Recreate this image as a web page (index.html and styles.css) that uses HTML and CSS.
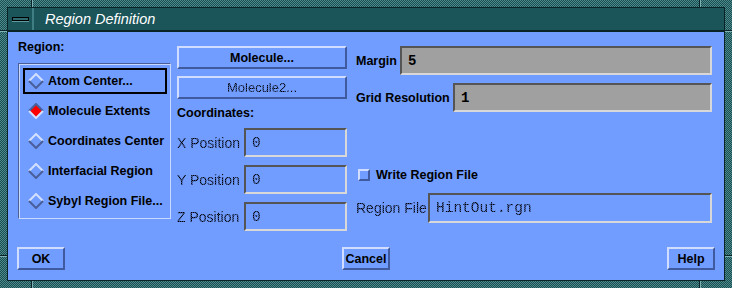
FILE: index.html
```html
<!DOCTYPE html>
<html lang="en">
<head>
  <meta charset="UTF-8">
  <title>Region Definition</title>
  <link rel="stylesheet" href="styles.css">
</head>
<body>
  <div class="window">
    <div class="inner">
      <!-- Title bar -->
      <div class="titlebar">
        <div class="menu-btn"><span class="menu-bar"></span></div>
        <div class="title">Region Definition</div>
      </div>

      <div class="content">
        <div class="top">
          <!-- Region choice -->
          <div class="col-left">
            <div class="label">Region:</div>
            <div class="radio-box">
              <div class="radio focus">
                <svg class="diamond" width="16" height="16" viewBox="0 0 16 16"><polygon points="8,1 15,8 8,15 1,8" fill="#709dff"/><polyline points="1,8 8,1 15,8" fill="none" stroke="#d4e0ff" stroke-width="2"/><polyline points="1,8 8,15 15,8" fill="none" stroke="#4a5f9a" stroke-width="2"/></svg>
                Atom Center...
              </div>
              <div class="radio">
                <svg class="diamond" width="16" height="16" viewBox="0 0 16 16"><polygon points="8,1 15,8 8,15 1,8" fill="#ff0000"/><polyline points="1,8 8,1 15,8" fill="none" stroke="#4a5f9a" stroke-width="2"/><polyline points="1,8 8,15 15,8" fill="none" stroke="#d4e0ff" stroke-width="2"/></svg>
                Molecule Extents
              </div>
              <div class="radio">
                <svg class="diamond" width="16" height="16" viewBox="0 0 16 16"><polygon points="8,1 15,8 8,15 1,8" fill="#709dff"/><polyline points="1,8 8,1 15,8" fill="none" stroke="#d4e0ff" stroke-width="2"/><polyline points="1,8 8,15 15,8" fill="none" stroke="#4a5f9a" stroke-width="2"/></svg>
                Coordinates Center
              </div>
              <div class="radio">
                <svg class="diamond" width="16" height="16" viewBox="0 0 16 16"><polygon points="8,1 15,8 8,15 1,8" fill="#709dff"/><polyline points="1,8 8,1 15,8" fill="none" stroke="#d4e0ff" stroke-width="2"/><polyline points="1,8 8,15 15,8" fill="none" stroke="#4a5f9a" stroke-width="2"/></svg>
                Interfacial Region
              </div>
              <div class="radio">
                <svg class="diamond" width="16" height="16" viewBox="0 0 16 16"><polygon points="8,1 15,8 8,15 1,8" fill="#709dff"/><polyline points="1,8 8,1 15,8" fill="none" stroke="#d4e0ff" stroke-width="2"/><polyline points="1,8 8,15 15,8" fill="none" stroke="#4a5f9a" stroke-width="2"/></svg>
                Sybyl Region File...
              </div>
            </div>
          </div>

          <!-- Molecule / coordinates -->
          <div class="col-mid">
            <button class="btn wide">Molecule...</button>
            <button class="btn wide"><span class="stipple thin">Molecule2...</span></button>
            <div class="label coords">Coordinates:</div>
            <div class="pos-row">
              <span class="pos-label stipple">X Position</span>
              <div class="field"><span class="stipple mono">0</span></div>
            </div>
            <div class="pos-row">
              <span class="pos-label stipple">Y Position</span>
              <div class="field"><span class="stipple mono">0</span></div>
            </div>
            <div class="pos-row">
              <span class="pos-label stipple">Z Position</span>
              <div class="field"><span class="stipple mono">0</span></div>
            </div>
          </div>

          <!-- Margin / grid / file -->
          <div class="col-right">
            <div class="row">
              <span class="label lbl-margin">Margin</span>
              <div class="field grey">5</div>
            </div>
            <div class="row">
              <span class="label lbl-grid">Grid Resolution</span>
              <div class="field grey">1</div>
            </div>
            <div class="check-row">
              <span class="checkbox"></span>
              <span class="label">Write Region File</span>
            </div>
            <div class="row file-row">
              <span class="pos-label lbl-file stipple">Region File</span>
              <div class="field"><span class="stipple mono">HintOut.rgn</span></div>
            </div>
          </div>
        </div>

        <!-- Buttons -->
        <div class="actions">
          <button class="btn">OK</button>
          <button class="btn">Cancel</button>
          <button class="btn">Help</button>
        </div>
      </div>
    </div>
  </div>
</body>
</html>
```

FILE: styles.css
```css
body {
  margin: 0;
  width: 732px;
  height: 288px;
  font-family: "Liberation Sans", Arial, sans-serif;
  font-size: 12.5px;
  font-weight: bold;
  color: #000;
  overflow: hidden;
}

/* Fensterrahmen mit Ecken-Kerben */
.window {
  box-sizing: border-box;
  width: 732px;
  height: 288px;
  padding: 7px;
  background:
    linear-gradient(90deg, #0a2326 1px, #7fb2b4 1px) 31px 0 / 2px 8px no-repeat,
    linear-gradient(90deg, #0a2326 1px, #7fb2b4 1px) 31px 280px / 2px 8px no-repeat,
    linear-gradient(90deg, #0a2326 1px, #7fb2b4 1px) 699px 0 / 2px 8px no-repeat,
    linear-gradient(90deg, #0a2326 1px, #7fb2b4 1px) 699px 280px / 2px 8px no-repeat,
    linear-gradient(#0a2326 1px, #7fb2b4 1px) 0 30px / 8px 2px no-repeat,
    linear-gradient(#0a2326 1px, #7fb2b4 1px) 724px 30px / 8px 2px no-repeat,
    linear-gradient(#0a2326 1px, #7fb2b4 1px) 0 255px / 8px 2px no-repeat,
    linear-gradient(#0a2326 1px, #7fb2b4 1px) 724px 255px / 8px 2px no-repeat,
    repeating-conic-gradient(#1b4d51 0 25%, #4b8a8d 0 50%) 0 0 / 2px 2px,
    #2f6c70;
}

.inner {
  box-sizing: border-box;
  height: 100%;
  border: 1px solid #0a2326;
  display: flex;
  flex-direction: column;
}

/* Titelzeile */
.titlebar {
  height: 22px;
  display: flex;
  background-color: #1b5459;
  border-bottom: 2px solid #0a2326;
}

.menu-btn {
  width: 24px;
  display: flex;
  align-items: center;
  justify-content: center;
  border-right: 2px solid #3f7e82;
}

.menu-bar {
  width: 15px;
  height: 2px;
  border: 1px solid #000;
  background-color: #2f6c70;
  box-shadow: 0 1px 0 #5f9a9c;
}

.title {
  padding-left: 11px;
  line-height: 22px;
  font-size: 14.5px;
  font-style: italic;
  font-weight: normal;
  color: #fff;
}

.content {
  flex: 1;
  display: flex;
  flex-direction: column;
  background-color: #709dff;
}

.top {
  flex: 1;
  display: flex;
  padding: 8px 12px 0 10px;
}

.label {
  line-height: 14px;
  white-space: nowrap;
}

/* linke Spalte */
.col-left {
  width: 153px;
}

.radio-box {
  margin-top: 9px;
  padding: 4px 3px 0 4px;
  border: 1px solid #c8d8ff;
  border-top-color: #4a5f9a;
  border-left-color: #4a5f9a;
  box-shadow: inset 1px 1px 0 #c8d8ff;
}

.radio {
  height: 26px;
  box-sizing: border-box;
  margin-bottom: 4px;
  padding-left: 3px;
  border: 2px solid transparent;
  display: flex;
  align-items: center;
  gap: 4px;
  white-space: nowrap;
}

.radio.focus {
  border-color: #000;
}

.diamond {
  flex: none;
}

/* mittlere Spalte */
.col-mid {
  width: 170px;
  margin-left: 6px;
  padding-top: 6px;
}

.btn {
  box-sizing: border-box;
  width: 48px;
  height: 23px;
  padding: 0;
  font: inherit;
  color: #000;
  background-color: #709dff;
  border: 2px solid;
  border-color: #d0ddff #3f5a9e #3f5a9e #d0ddff;
}

.btn.wide {
  display: block;
  width: 100%;
  margin-bottom: 7px;
}

.stipple {
  color: transparent;
  background: repeating-conic-gradient(#000 0 25%, #34477e 0 50%) 0 0 / 2px 2px;
  -webkit-background-clip: text;
  background-clip: text;
}

.thin {
  font-weight: normal;
  font-size: 13px;
}

.coords {
  margin-bottom: 8px;
}

.pos-row {
  display: flex;
  align-items: center;
  margin-bottom: 8px;
}

.pos-label {
  width: 67px;
  flex: none;
  font-weight: normal;
  font-size: 14px;
  white-space: nowrap;
}

.field {
  flex: 1;
  box-sizing: border-box;
  height: 29px;
  padding-left: 6px;
  display: flex;
  align-items: center;
  border: 2px solid;
  border-color: #555 #d8d8d8 #d8d8d8 #555;
  font-family: "Liberation Mono", "Courier New", monospace;
  font-size: 14px;
}

.mono {
  font-family: "Liberation Mono", "Courier New", monospace;
  font-weight: normal;
  font-size: 14.5px;
}

.field.grey {
  background-color: #a0a0a0;
}

/* rechte Spalte */
.col-right {
  flex: 1;
  margin-left: 9px;
  padding-top: 6px;
}

.row {
  display: flex;
  align-items: center;
  margin-bottom: 8px;
}

.lbl-margin {
  width: 44px;
}

.lbl-grid {
  width: 97px;
}

.check-row {
  display: flex;
  align-items: center;
  gap: 6px;
  margin: 57px 0 12px 2px;
  height: 12px;
}

.checkbox {
  box-sizing: border-box;
  width: 12px;
  height: 12px;
  border: 2px solid;
  border-color: #d0ddff #3f5a9e #3f5a9e #d0ddff;
}

.file-row .field {
  height: 30px;
}

.lbl-file {
  width: 72px;
}

/* untere Knöpfe */
.actions {
  display: flex;
  justify-content: space-between;
  padding: 0 9px 10px;
}
```
